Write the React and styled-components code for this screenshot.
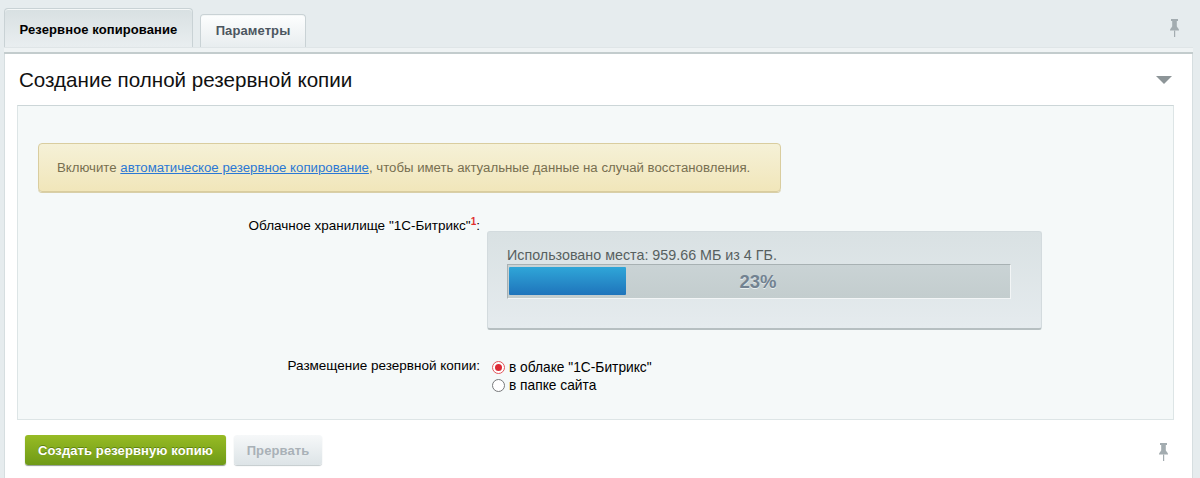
import React from "react";
import styled, { createGlobalStyle } from "styled-components";

const Global = createGlobalStyle`
  html, body { margin: 0; padding: 0; background: #e6ecee; }
  body { font-family: "Liberation Sans", Arial, sans-serif; height: 478px; overflow: hidden; }
`;

const Page = styled.div`
  width: 1200px;
  height: 478px;
  padding: 8px 7px 0 4px;
  box-sizing: border-box;
  display: flex;
  flex-direction: column;
`;

const TabBar = styled.div`
  display: flex;
  align-items: flex-end;
  height: 39px;
  gap: 7px;
  position: relative;
`;

const Tab = styled.div`
  box-sizing: border-box;
  height: ${p => (p.$active ? 39 : 33)}px;
  padding: ${p => (p.$active ? "3px 0 0" : "0 0 2px")};
  width: ${p => (p.$active ? 189 : 106)}px;
  display: flex;
  align-items: center;
  justify-content: center;
  font-size: 13px;
  letter-spacing: 0.1px;
  font-weight: bold;
  color: ${p => (p.$active ? "#000" : "#4c5660")};
  border: 1px solid #c9d2d5;
  border-bottom: none;
  border-radius: 4px 4px 0 0;
  background: ${p =>
    p.$active
      ? "linear-gradient(#d8e0e2, #e9eef0)"
      : "linear-gradient(#fdfefe, #e8edef)"};
  box-shadow: inset 0 1px 0 #f4f7f7;
`;

const PinSlot = styled.div`
  position: absolute;
  right: ${p => p.$right}px;
  top: ${p => p.$top}px;
  line-height: 0;
`;

const Strip = styled.div`
  background: #eff3f4;
  border-top: 1px solid #dfe5e7;
  border-bottom: 2px solid #c3cccd;
  box-sizing: border-box;
  height: 7px;
`;

const Panel = styled.div`
  flex: 1;
  background: #fff;
  border-left: 1px solid #d6dee0;
  border-right: 1px solid #d6dee0;
  padding: 0 18px 0 12px;
  position: relative;
`;

const TitleRow = styled.div`
  height: 51px;
  box-sizing: border-box;
  padding: 12px 0 0 2px;
  display: flex;
  justify-content: space-between;
`;

const Title = styled.div`
  font-size: 20.6px;
  line-height: 28px;
  color: #111;
`;

const Caret = styled.div`
  width: 0;
  height: 0;
  border-left: 8px solid transparent;
  border-right: 8px solid transparent;
  border-top: 8px solid #8d9598;
  position: absolute;
  right: 20px;
  top: 22px;
`;

const Inner = styled.div`
  height: 315px;
  box-sizing: border-box;
  background: #f5f9f9;
  border: 1px solid #dde5e6;
  border-top: 1px solid #ccd6d8;
  padding: 37px 20px 0 20px;
`;

const Notice = styled.div`
  box-sizing: border-box;
  width: 743px;
  height: 49px;
  padding: 0 18px;
  display: flex;
  align-items: center;
  border: 1px solid #d9cd9f;
  border-radius: 4px;
  background: linear-gradient(#f5f1d7, #f1e6ba);
  box-shadow: 0 1px 0 #d8cfa8;
  font-size: 13.22px;
  color: #776f50;
  white-space: pre;
`;

const Link = styled.a`
  color: #2b78d4;
  text-decoration: underline;
`;

const FormRow = styled.div`
  display: grid;
  grid-template-columns: 443px auto;
  column-gap: 7px;
  margin-left: -1px;
  margin-top: ${p => p.$top}px;
`;

const Label = styled.div`
  text-align: right;
  font-size: 13.5px;
  line-height: 15px;
  color: #000;
  margin: ${p => p.$shift || 0}px 0 0 -20px;
`;

const Sup = styled.span`
  color: #e0302f;
  font-family: "Liberation Sans", Arial, sans-serif;
  font-size: 10px;
  font-weight: bold;
  line-height: 0;
  vertical-align: 5px;
`;

const Quota = styled.div`
  box-sizing: border-box;
  width: 555px;
  height: 99px;
  padding: 15px 30px 0 19px;
  border: 1px solid #d3dbde;
  border-bottom: 2px solid #b6bfc1;
  border-radius: 3px;
  background: linear-gradient(#d9e1e3, #e5ebee);
`;

const QuotaText = styled.div`
  font-size: 14.3px;
  line-height: 16px;
  color: #57605f;
`;

const Bar = styled.div`
  box-sizing: border-box;
  height: 35px;
  margin-top: 1px;
  padding: 2px 1px;
  position: relative;
  border: 1px solid #a8b1b3;
  border-bottom-color: #f2f5f6;
  border-right-color: #f2f5f6;
  background: linear-gradient(#cad3d5, #c3cdce);
  display: flex;
`;

const Fill = styled.div`
  height: 28px;
  border-radius: 1px;
  background: linear-gradient(#2fa6d8, #1f74bb);
`;

const Percent = styled.div`
  position: absolute;
  left: 0;
  right: 2px;
  top: 0;
  bottom: 0;
  display: flex;
  align-items: center;
  justify-content: center;
  font-size: 18.5px;
  font-weight: bold;
  color: #728291;
  text-shadow: 0 1px 0 #e8eeef;
`;

const Options = styled.div`
  display: flex;
  flex-direction: column;
  gap: 1px;
  padding: 1px 0 0 5px;
`;

const Option = styled.div`
  display: flex;
  align-items: center;
  gap: 4px;
  height: 17px;
  font-size: 13.75px;
  color: #000;
`;

const Radio = styled.span`
  box-sizing: border-box;
  width: 13px;
  height: 13px;
  border-radius: 50%;
  flex: none;
  border: 1px solid ${p => (p.$on ? "#e2555b" : "#77797b")};
  background: #fff;
  display: flex;
  align-items: center;
  justify-content: center;
  &::after {
    content: "";
    width: 7px;
    height: 7px;
    border-radius: 50%;
    background: ${p => (p.$on ? "#dc2a35" : "transparent")};
  }
`;

const Actions = styled.div`
  display: flex;
  gap: 8px;
  padding: 15px 0 0 8px;
`;

const Button = styled.div`
  box-sizing: border-box;
  height: 30px;
  display: flex;
  align-items: center;
  justify-content: center;
  font-size: 13px;
  letter-spacing: 0.1px;
  font-weight: bold;
  border-radius: 3px;
`;

const Primary = styled(Button)`
  width: 201px;
  color: #fff;
  background: linear-gradient(#97bb24, #6f9a17);
  box-shadow: 0 1px 1px #8f9a90;
  text-shadow: 0 -1px 0 #5f8212;
`;

const Disabled = styled(Button)`
  width: 88px;
  color: #a9b1b7;
  background: linear-gradient(#f6f8f9, #dde4e7);
  box-shadow: 0 1px 1px #c3cacd;
`;

const Pin = () => (
  <svg width="11" height="18" viewBox="0 0 11 18" fill="#a3acb0">
    <rect x="2" y="0" width="7" height="2" />
    <rect x="3.2" y="2" width="4.6" height="6" />
    <path d="M3.2 7.5 L7.8 7.5 L10 10.5 L10 11.5 L1 11.5 L1 10.5 Z" />
    <rect x="5" y="11.5" width="1.2" height="6.5" />
  </svg>
);

export default function App() {
  return (
    <Page>
      <Global />
      <TabBar>
        <Tab $active>Резервное копирование</Tab>
        <Tab>Параметры</Tab>
        <PinSlot $right={13} $top={11}><Pin /></PinSlot>
      </TabBar>
      <Strip />
      <Panel>
        <TitleRow>
          <Title>Создание полной резервной копии</Title>
          <Caret />
        </TitleRow>
        <Inner>
          <Notice>
            Включите <Link>автоматическое резервное копирование</Link>, чтобы иметь актуальные данные на случай восстановления.
          </Notice>
          <FormRow $top={39}>
            <Label $shift={-13}>Облачное хранилище "1С-Битрикс"<Sup>1</Sup>:</Label>
            <Quota>
              <QuotaText>Использовано места: 959.66 МБ из 4 ГБ.</QuotaText>
              <Bar>
                <Fill style={{ width: "23.4%" }} />
                <Percent>23%</Percent>
              </Bar>
            </Quota>
          </FormRow>
          <FormRow $top={28}>
            <Label>Размещение резервной копии:</Label>
            <Options>
              <Option><Radio $on />в облаке "1С-Битрикс"</Option>
              <Option><Radio />в папке сайта</Option>
            </Options>
          </FormRow>
        </Inner>
        <Actions>
          <Primary>Создать резервную копию</Primary>
          <Disabled>Прервать</Disabled>
        </Actions>
        <PinSlot $right={23} $top={389}><Pin /></PinSlot>
      </Panel>
    </Page>
  );
}
